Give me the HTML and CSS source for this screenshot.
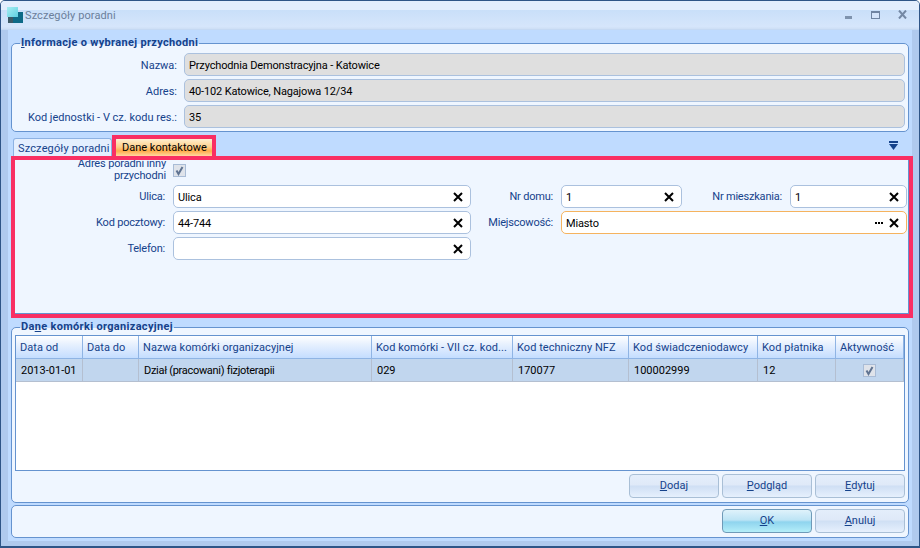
FILE: index.html
```html
<!DOCTYPE html>
<html lang="pl">
<head>
  <meta charset="UTF-8">
  <title>Szczegóły poradni</title>
  <link rel="stylesheet" href="styles.css">
</head>
<body>
  <svg class="sprites" width="0" height="0">
    <symbol id="x" viewBox="0 0 10 10"><path d="M1 1 9 9M9 1 1 9" stroke="#000" stroke-width="2" fill="none"/></symbol>
    <symbol id="check" viewBox="0 0 13 13"><rect x=".5" y=".5" width="12" height="12" fill="#dfe3ea" stroke="#a9bcd6"/><path d="M3.5 6.5 5.5 10 9.5 3" stroke="#5f7391" stroke-width="2" fill="none"/></symbol>
  </svg>

  <div class="window">
    <div class="titlebar">
      <svg class="app-icon" width="16" height="16" viewBox="0 0 16 16">
        <defs>
          <linearGradient id="cyan" x1="0" y1="0" x2="1" y2="1"><stop offset="0" stop-color="#a8eef2"/><stop offset="1" stop-color="#5fd0e0"/></linearGradient>
        </defs>
        <rect x="1" y="9" width="7" height="7" fill="#3d5a66"/>
        <rect x="6" y="5" width="10" height="11" fill="#0e6a86"/>
        <rect x="0" y="0" width="11" height="10" fill="url(#cyan)"/>
      </svg>
      <span class="title">Szczegóły poradni</span>
      <div class="win-buttons">
        <svg class="win-min" width="7" height="3" viewBox="0 0 7 3"><rect width="7" height="3" fill="#7f93ad"/></svg>
        <svg width="9" height="8" viewBox="0 0 9 8"><rect x=".5" y=".5" width="8" height="7" fill="#d4e4fa" stroke="#6f84a2"/><rect width="9" height="2" fill="#6f84a2"/></svg>
        <svg width="9" height="9" viewBox="0 0 9 9"><path d="M1 .5 8 8.5M8 .5 1 8.5" stroke="#7488a4" stroke-width="2" fill="none"/></svg>
      </div>
    </div>

    <div class="frame">
      <div class="client">
        <section class="group info">
          <h2 class="legend"><u>I</u>nformacje o wybranej przychodni</h2>
          <div class="info-row"><label>Nazwa:</label><div class="field readonly">Przychodnia Demonstracyjna - Katowice</div></div>
          <div class="info-row"><label>Adres:</label><div class="field readonly">40-102 Katowice, Nagajowa 12/34</div></div>
          <div class="info-row"><label>Kod jednostki - V cz. kodu res.:</label><div class="field readonly">35</div></div>
        </section>

        <div class="tabs">
          <div class="tab">Szczegóły poradni</div>
          <div class="tab active">Dane kontaktowe<div class="mark mark-tab"></div></div>
          <svg class="tabs-menu" width="9" height="9" viewBox="0 0 9 9"><rect width="9" height="2" fill="#15428b"/><path d="M0 3h9L4.5 9z" fill="#15428b"/></svg>
        </div>

        <div class="panel">
          <div class="mark mark-panel"></div>
          <div class="check-row">
            <label>Adres poradni inny<br>przychodni</label>
            <svg class="checkbox" width="13" height="13"><use href="#check"/></svg>
          </div>
          <div class="form-grid">
            <label>Ulica:</label>
            <div class="field">Ulica<svg class="clear" width="10" height="10"><use href="#x"/></svg></div>
            <label>Nr domu:</label>
            <div class="field">1<svg class="clear" width="10" height="10"><use href="#x"/></svg></div>
            <label>Nr mieszkania:</label>
            <div class="field">1<svg class="clear" width="10" height="10"><use href="#x"/></svg></div>

            <label>Kod pocztowy:</label>
            <div class="field">44-744<svg class="clear" width="10" height="10"><use href="#x"/></svg></div>
            <label>Miejscowość:</label>
            <div class="field focused wide">Miasto
              <svg class="dots" width="8" height="2" viewBox="0 0 8 2"><path d="M0 0h2v2H0zM3 0h2v2H3zM6 0h2v2H6z"/></svg>
              <svg class="clear" width="10" height="10"><use href="#x"/></svg>
            </div>

            <label>Telefon:</label>
            <div class="field"><svg class="clear" width="10" height="10"><use href="#x"/></svg></div>
          </div>
        </div>

        <section class="group units">
          <h2 class="legend">Da<u>n</u>e komórki organizacyjnej</h2>
          <div class="table-box">
            <table>
              <colgroup>
                <col class="c1"><col class="c2"><col class="c3"><col class="c4">
                <col class="c5"><col class="c6"><col class="c7"><col class="c8">
              </colgroup>
              <thead>
                <tr>
                  <th>Data od</th><th>Data do</th><th>Nazwa komórki organizacyjnej</th><th>Kod komórki - VII cz. kod...</th>
                  <th>Kod techniczny NFZ</th><th>Kod świadczeniodawcy</th><th>Kod płatnika</th><th>Aktywność</th>
                </tr>
              </thead>
              <tbody>
                <tr>
                  <td>2013-01-01</td><td></td><td class="name">Dział (pracowani) fizjoterapii</td><td>029</td>
                  <td>170077</td><td>100002999</td><td>12</td>
                  <td class="center"><svg class="checkbox" width="13" height="13"><use href="#check"/></svg></td>
                </tr>
              </tbody>
            </table>
          </div>
          <div class="buttons">
            <button><u>D</u>odaj</button>
            <button><u>P</u>odgląd</button>
            <button><u>E</u>dytuj</button>
          </div>
        </section>

        <section class="group footer">
          <div class="buttons">
            <button class="primary"><u>O</u>K</button>
            <button><u>A</u>nuluj</button>
          </div>
        </section>
      </div>
    </div>
  </div>
</body>
</html>
```

FILE: styles.css
```css
* {
  box-sizing: border-box;
}

body {
  margin: 0;
  width: 920px;
  height: 548px;
  overflow: hidden;
  font-family: Roboto, "Liberation Sans", Arial, sans-serif;
  font-size: 11px;
  color: #15428b;
  background: #fff;
}

.sprites {
  position: absolute;
}

label {
  color: #15428b;
}

/* Window chrome */
.window {
  width: 920px;
  height: 548px;
  display: flex;
  flex-direction: column;
  border: 1px solid #2f5587;
  border-bottom-width: 2px;
  border-radius: 5px 5px 0 0;
  overflow: hidden;
}

.titlebar {
  height: 29px;
  flex: none;
  display: flex;
  align-items: center;
  padding: 0 12px 0 6px;
  background: linear-gradient(#e3eefd 0, #e3eefd 9px, #c9dff9 9px, #d6e6fb 26px, #cfe0f6 27px);
  border-bottom: 1px solid #c5d9f3;
}

.app-icon {
  margin-right: 2px;
}

.title {
  color: #6b7f9b;
  letter-spacing: .1px;
}

.win-buttons {
  margin-left: auto;
  margin-top: -1px;
  display: flex;
  align-items: flex-end;
  gap: 18px;
}

.win-min {
  margin-right: 1px;
}

.frame {
  flex: 1;
  display: flex;
  padding: 0 7px 6px 7px;
  background: #b0caee;
}

.client {
  flex: 1;
  padding: 13px 3px 3px 3px;
  background: #bfdbff;
}

/* Groups */
.group {
  position: relative;
  background: #eff6ff;
  border: 1px solid #6593cf;
  border-radius: 5px;
}

.legend {
  position: absolute;
  left: 8px;
  top: -8px;
  margin: 0;
  padding: 0 1px;
  font-size: 11px;
  line-height: 14px;
  font-weight: bold;
  letter-spacing: .32px;
  color: #15428b;
  background: linear-gradient(#bfdbff 8px, #eff6ff 8px);
}

.info {
  height: 89px;
  padding: 9px 3px 0 0;
}

.info-row {
  display: flex;
  align-items: center;
  gap: 7px;
  margin-bottom: 3px;
}

.info-row label {
  width: 165px;
  padding-top: 1px;
  text-align: right;
}

.info-row .field {
  flex: 1;
}

/* Fields */
.field {
  position: relative;
  height: 23px;
  line-height: 22px;
  padding: 1px 0 0 4px;
  letter-spacing: -.15px;
  color: #000;
  background: #fff;
  border: 1px solid #abc1de;
  border-radius: 5px;
}

.field.readonly {
  background: #dfdfdf;
}

.field.focused {
  border-color: #f5b35f;
}

.clear {
  position: absolute;
  right: 7px;
  top: 6px;
}

.dots {
  position: absolute;
  right: 23px;
  top: 10px;
}

/* Tabs */
.tabs {
  position: relative;
  height: 25px;
  display: flex;
  align-items: flex-end;
  padding-left: 2px;
  gap: 4px;
}

.tab {
  position: relative;
  width: 99px;
  height: 19px;
  padding: 0 0 0 4px;
  line-height: 19px;
  white-space: nowrap;
  letter-spacing: .15px;
  background: #e4effe;
  border: 1px solid #8db2e3;
  border-bottom: none;
  border-radius: 3px 3px 0 0;
}

.tab.active {
  width: 96px;
  padding: 0 0 0 6px;
  letter-spacing: 0;
  color: #000;
  border: none;
  background: linear-gradient(#fff3d9 0, #ffd08a 9px, #ffac4a 13px, #ffe2b4 19px);
}

.tabs-menu {
  position: absolute;
  right: 11px;
  top: 9px;
}

/* Pink call-outs drawn over the page */
.mark {
  position: absolute;
  border: 4px solid #f92f63;
  pointer-events: none;
}

.mark-tab {
  left: -4px;
  top: -3px;
  width: 104px;
  height: 22px;
  border-bottom: none;
}

.mark-panel {
  left: -1px;
  top: -1px;
  width: 902px;
  height: 162px;
}

/* Contact panel */
.panel {
  position: relative;
  height: 157px;
  width: 897px;
  margin-left: 1px;
  margin-bottom: 13px;
  padding: 1px 0 0 0;
  background: #eff6ff;
  border-bottom: 1px solid #6593cf;
  border-right: 1px solid #6593cf;
}

.check-row {
  display: flex;
  align-items: flex-start;
  height: 27px;
}

.check-row label {
  width: 161px;
  line-height: 12px;
  padding-right: 7px;
  text-align: right;
  letter-spacing: -.15px;
}

.check-row .checkbox {
  margin-top: 6px;
}

.form-grid {
  display: grid;
  grid-template-columns: 161px 298px 90px 121px 108px 117px;
  grid-auto-rows: 23px;
  row-gap: 3px;
}

.form-grid label {
  line-height: 23px;
  text-align: right;
  padding-right: 8px;
  letter-spacing: -.2px;
}

.form-grid .wide {
  grid-column: 4 / span 3;
}

/* Table */
.units {
  height: 176px;
  padding: 7px 3px 0 3px;
  margin-bottom: 2px;
}

.table-box {
  height: 136px;
  background: #fff;
  border: 1px solid #6593cf;
}

table {
  width: 888px;
  table-layout: fixed;
  border-collapse: separate;
  border-spacing: 0;
}

.c1 { width: 67px; }
.c2 { width: 56px; }
.c3 { width: 233px; }
.c4 { width: 141px; }
.c5 { width: 116px; }
.c6 { width: 129px; }
.c7 { width: 78px; }
.c8 { width: 68px; }

th {
  height: 23px;
  padding: 0 0 0 4px;
  font-weight: normal;
  text-align: left;
  color: #15428b;
  white-space: nowrap;
  letter-spacing: .05px;
  background: linear-gradient(#fff 0, #e8f1fe 8px, #c4ddff);
  border-right: 1px solid #8fb4e4;
  border-bottom: 1px solid #8fb4e4;
}

td {
  height: 23px;
  padding: 1px 0 0 5px;
  color: #000;
  background: #c1d6ee;
  border-right: 1px solid #b4bfd0;
  border-bottom: 1px solid #b4bfd0;
}

td.name {
  letter-spacing: -.3px;
}

.center {
  padding: 0;
  text-align: center;
}

.center .checkbox {
  display: inline-block;
  vertical-align: middle;
}

/* Buttons */
.buttons {
  display: flex;
  justify-content: flex-end;
  gap: 3px;
  margin-top: 3px;
}

button {
  width: 90px;
  height: 24px;
  padding: 0 0 1px 0;
  font: inherit;
  color: #15428b;
  background: linear-gradient(#e4eefb 0, #dfe9f8 10px, #cfdff4 11px, #e6f0fd);
  border: 1px solid #a9bfd6;
  border-radius: 4px;
}

button.primary {
  border-color: #6f9ab8;
  background: linear-gradient(#dff2fb 0, #bde4f5 10px, #8fd4ee 12px, #b4eef9);
}

.footer {
  height: 33px;
  padding: 0 3px 0 0;
}
```
